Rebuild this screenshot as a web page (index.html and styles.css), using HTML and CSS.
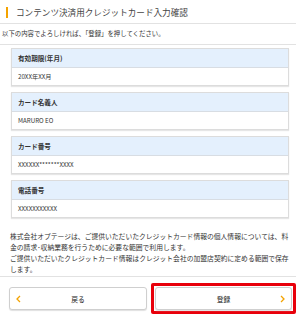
FILE: index.html
```html
<!DOCTYPE html>
<html lang="ja">

<head>
  <meta charset="UTF-8">
  <meta name="viewport" content="width=device-width, initial-scale=1.0">
  <title>クレジットカード入力確認</title>
  <link rel="stylesheet" href="styles.css">
</head>

<body>
  <div class="page">
    <h1 class="title"><span class="title-text">コンテンツ決済用クレジットカード入力確認</span></h1>
    <p class="lead">以下の内容でよろしければ、「登録」を押してください。</p>

    <div class="cards">
      <div class="card">
        <div class="card-head">有効期限(年月)</div>
        <div class="card-body">20XX年XX月</div>
      </div>
      <div class="card">
        <div class="card-head">カード名義人</div>
        <div class="card-body">MARURO EO</div>
      </div>
      <div class="card">
        <div class="card-head">カード番号</div>
        <div class="card-body">XXXXXX*******XXXX</div>
      </div>
      <div class="card">
        <div class="card-head">電話番号</div>
        <div class="card-body">XXXXXXXXXXX</div>
      </div>
    </div>

    <p class="note">株式会社オプテージは、ご提供いただいたクレジットカード情報の個人情報については、料金の請求･収納業務を行うために必要な範囲で利用します。<br>ご提供いただいたクレジットカード情報はクレジット会社の加盟店契約に定める範囲で保存します。</p>

    <div class="actions">
      <button class="btn back">
        <svg class="arrow left" width="5" height="8" viewBox="0 0 5 8"><path d="M4 1 L1 4 L4 7" fill="none" stroke="#f4a300" stroke-width="1.3"/></svg>
        戻る
      </button>
      <div class="highlight">
        <button class="btn submit">
          登録
          <svg class="arrow right" width="5" height="8" viewBox="0 0 5 8"><path d="M1 1 L4 4 L1 7" fill="none" stroke="#f4a300" stroke-width="1.3"/></svg>
        </button>
      </div>
    </div>
  </div>
</body>

</html>
```

FILE: styles.css
```css
* {
  margin: 0;
  padding: 0;
  box-sizing: border-box;
}

body {
  background-color: #ffffff;
  color: #333333;
  font-family: "Noto Sans CJK JP", "Liberation Sans", sans-serif;
}

.page {
  width: 296px;
  height: 316px;
  overflow: hidden;
}

.title {
  height: 24px;
  padding: 7px 0 0 6px;
  border-bottom: 1px solid #e2e2e2;
  font-size: 8.6px;
  font-weight: normal;
  line-height: 11px;
}

.title-text {
  display: block;
  border-left: 2px solid #f4a300;
  padding-left: 8px;
  color: #444444;
}

.lead {
  height: 21px;
  padding: 4px 0 0 2px;
  border-bottom: 1px solid #e2e2e2;
  font-size: 6.4px;
  line-height: 11px;
}

.cards {
  display: flex;
  flex-direction: column;
  gap: 6px;
  padding: 3px 7px 0 11px;
}

.card {
  border: 1px solid #dcdcdc;
  box-shadow: 0 1px 1px #e6e6e6;
}

.card-head {
  height: 19px;
  padding: 0 6px;
  background-color: #e4f0fd;
  border-bottom: 1px solid #d8dde3;
  font-size: 6.6px;
  font-weight: bold;
  line-height: 18px;
}

.card-body {
  height: 17px;
  padding: 0 6px;
  font-size: 6.2px;
  line-height: 17px;
}

.note {
  padding: 13px 4px 0 10px;
  font-size: 6.8px;
  line-height: 11px;
  height: 58px;
}

.actions {
  display: flex;
  align-items: center;
  gap: 4px;
  border-top: 1px solid #e2e2e2;
  padding: 6px 0 0 9px;
}

.btn {
  position: relative;
  height: 23px;
  background-color: #ffffff;
  border: 1px solid #cfcfcf;
  border-radius: 3px;
  box-shadow: 0 1px 1px #e0e0e0;
  color: #222222;
  font-family: inherit;
  font-size: 6.8px;
  cursor: pointer;
}

.back {
  width: 138px;
}

.highlight {
  border: 3px solid #e8000b;
  border-radius: 2px;
  padding: 1px;
}

.submit {
  width: 137px;
  display: block;
}

.arrow {
  position: absolute;
  top: 7px;
}

.arrow.left {
  left: 6px;
}

.arrow.right {
  right: 6px;
}
```
